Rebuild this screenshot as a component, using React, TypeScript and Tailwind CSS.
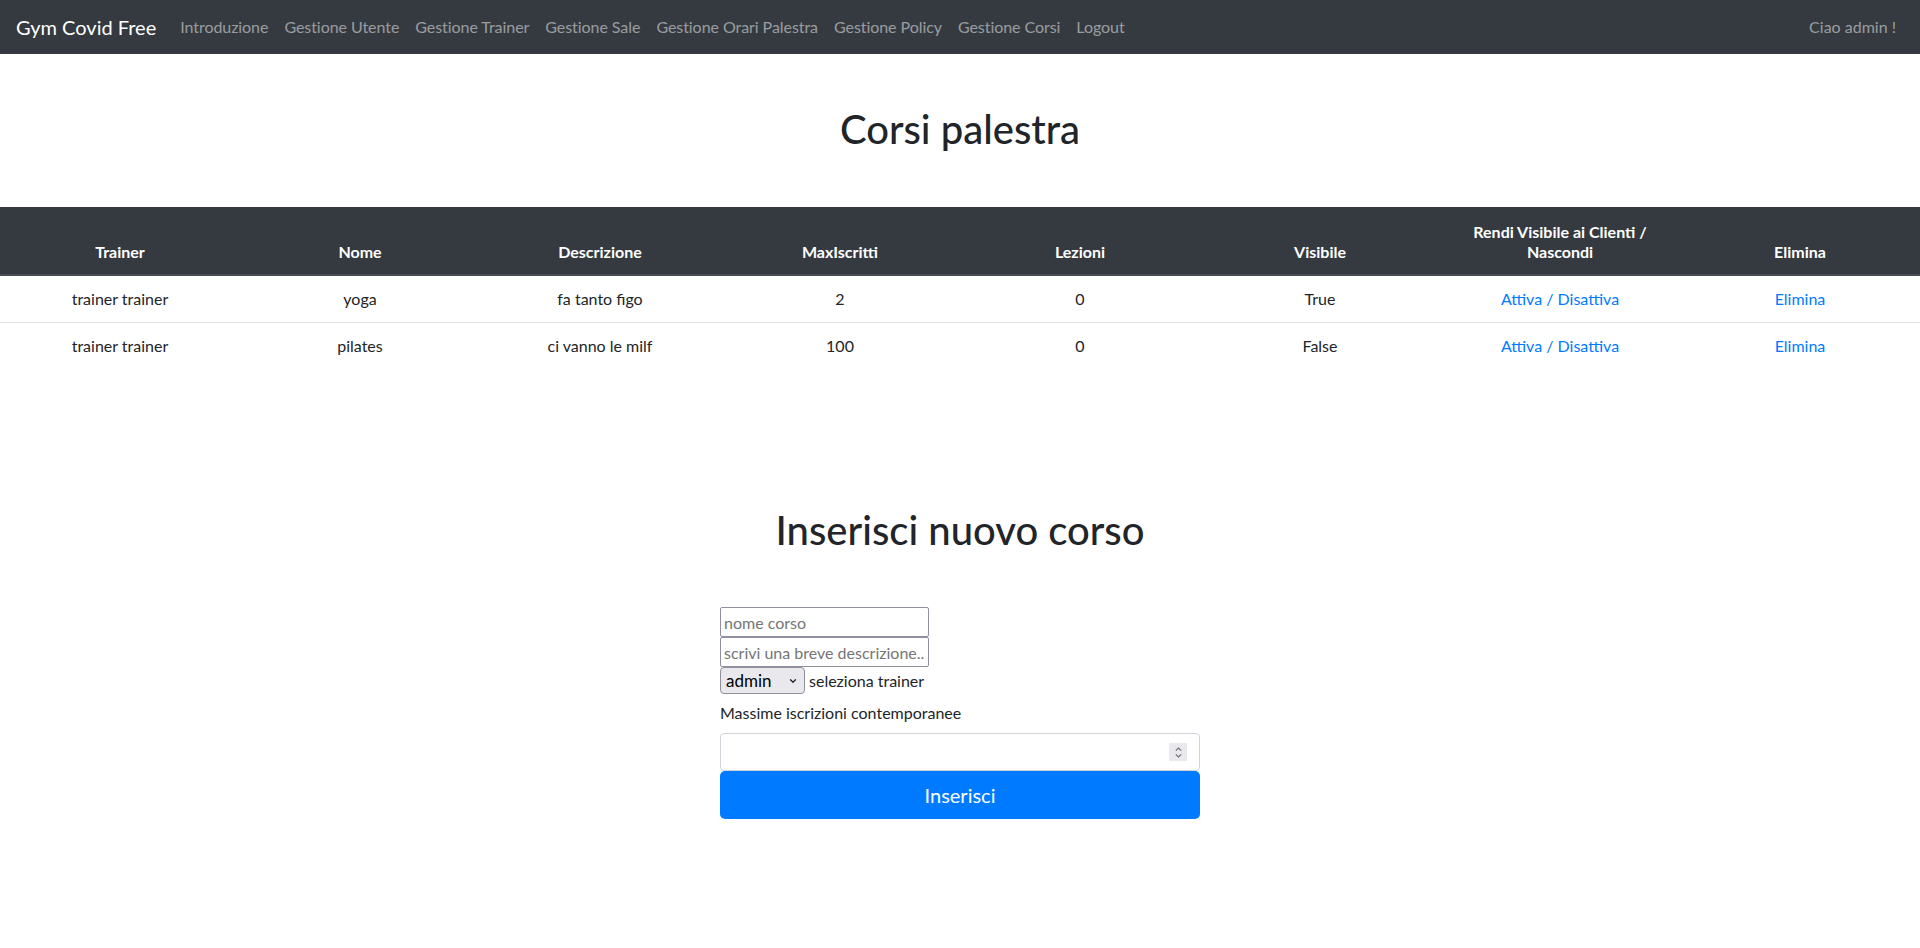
import { ChevronDown } from "lucide-react"

type Corso = {
  trainer: string
  nome: string
  descrizione: string
  maxIscritti: number
  lezioni: number
  visibile: boolean
}

const corsi: Corso[] = [
  { trainer: "trainer trainer", nome: "yoga", descrizione: "fa tanto figo", maxIscritti: 2, lezioni: 0, visibile: true },
  { trainer: "trainer trainer", nome: "pilates", descrizione: "ci vanno le milf", maxIscritti: 100, lezioni: 0, visibile: false },
]

const navLinks = [
  "Introduzione",
  "Gestione Utente",
  "Gestione Trainer",
  "Gestione Sale",
  "Gestione Orari Palestra",
  "Gestione Policy",
  "Gestione Corsi",
  "Logout",
]

const headers = ["Trainer", "Nome", "Descrizione", "MaxIscritti", "Lezioni", "Visibile", "Rendi Visibile ai Clienti / Nascondi", "Elimina"]

function Navbar() {
  return (
    <nav className="h-[54px] bg-[#343a40] flex items-center px-4">
      <a href="#" className="text-[20px] text-white mr-4 leading-[30px]">
        Gym Covid Free
      </a>
      <ul className="flex items-center">
        {navLinks.map((link) => (
          <li key={link}>
            <a href="#" className="px-2 text-[16px] tracking-[-0.06px] text-white/50 hover:text-white/75">
              {link}
            </a>
          </li>
        ))}
      </ul>
      <span className="ml-auto pr-2 text-[16px] text-white/50">Ciao admin !</span>
    </nav>
  )
}

function CorsiTable() {
  return (
    <table className="w-full table-fixed border-collapse mt-[54px] text-[16px] text-[#212529]">
      <thead>
        <tr>
          {headers.map((h) => (
            <th
              key={h}
              className="bg-[#343a40] text-white font-bold text-center align-bottom px-3 pt-[15px] pb-3 leading-[20px] border-b-2 border-[#454d55]"
            >
              {h}
            </th>
          ))}
        </tr>
      </thead>
      <tbody>
        {corsi.map((c, i) => (
          <tr key={c.nome} className={i > 0 ? "border-t border-[#dee2e6]" : ""}>
            <td className="px-3 py-3 leading-[22px] text-center">{c.trainer}</td>
            <td className="px-3 py-3 leading-[22px] text-center">{c.nome}</td>
            <td className="px-3 py-3 leading-[22px] text-center">{c.descrizione}</td>
            <td className="px-3 py-3 leading-[22px] text-center">{c.maxIscritti}</td>
            <td className="px-3 py-3 leading-[22px] text-center">{c.lezioni}</td>
            <td className="px-3 py-3 leading-[22px] text-center">{c.visibile ? "True" : "False"}</td>
            <td className="px-3 py-3 leading-[22px] text-center">
              <a href="#" className="text-[#007bff] hover:underline">
                Attiva / Disattiva
              </a>
            </td>
            <td className="px-3 py-3 leading-[22px] text-center">
              <a href="#" className="text-[#007bff] hover:underline">
                Elimina
              </a>
            </td>
          </tr>
        ))}
      </tbody>
    </table>
  )
}

function NuovoCorsoForm() {
  return (
    <form className="w-[480px] mx-auto mt-[53px] flex flex-col items-start text-[16px] text-[#212529]" onSubmit={(e) => e.preventDefault()}>
      <input
        type="text"
        placeholder="nome corso"
        className="w-[209px] h-[30px] px-[3px] border border-[#8f8f9d] rounded-[2px] text-[16px] placeholder:text-[#757575] outline-none"
      />
      <input
        type="text"
        placeholder="scrivi una breve descrizione..."
        className="w-[209px] h-[30px] px-[3px] border border-[#8f8f9d] rounded-[2px] text-[16px] placeholder:text-[#757575] outline-none"
      />
      <div className="flex items-center h-[27px]">
        <div className="relative">
          <select className="appearance-none w-[85px] h-[27px] pl-[5px] pr-5 bg-[#e9e9ed] border border-[#8f8f9d] rounded-[4px] text-[17px] text-black leading-[25px] outline-none">
            <option>admin</option>
            <option>trainer trainer</option>
          </select>
          <ChevronDown className="absolute right-[7px] top-[9px] w-[10px] h-[10px] pointer-events-none" strokeWidth={3} />
        </div>
        <span className="ml-1">seleziona trainer</span>
      </div>
      <label className="mt-[7px] mb-2 leading-6">Massime iscrizioni contemporanee</label>
      <div className="w-full h-[38px] flex items-center border border-[#ced4da] rounded-[4px] bg-white pr-3">
        <input type="text" inputMode="numeric" className="flex-1 h-full px-3 outline-none bg-transparent" />
        <span className="w-[18px] h-[18px] bg-[#e9e9ed] flex flex-col items-center justify-center">
          <svg viewBox="0 0 10 14" className="w-[9px] h-[13px]" fill="none" stroke="#6b6b70" strokeWidth="1.2">
            <path d="M2 5 L5 2 L8 5" />
            <path d="M2 9 L5 12 L8 9" />
          </svg>
        </span>
      </div>
      <button type="submit" className="w-full h-[48px] bg-[#007bff] text-white text-[20px] leading-[30px] rounded-[5px] hover:bg-[#0069d9]">
        Inserisci
      </button>
    </form>
  )
}

export default function App() {
  return (
    <div className="min-h-screen bg-white font-['Segoe_UI',Lato,'Liberation_Sans',sans-serif]">
      <Navbar />
      <h1 className="mt-[51px] text-[40px] font-medium leading-[48px] text-center text-[#212529]">Corsi palestra</h1>
      <CorsiTable />
      <h2 className="mt-[137px] text-[40px] font-medium leading-[48px] text-center text-[#212529]">Inserisci nuovo corso</h2>
      <NuovoCorsoForm />
    </div>
  )
}
